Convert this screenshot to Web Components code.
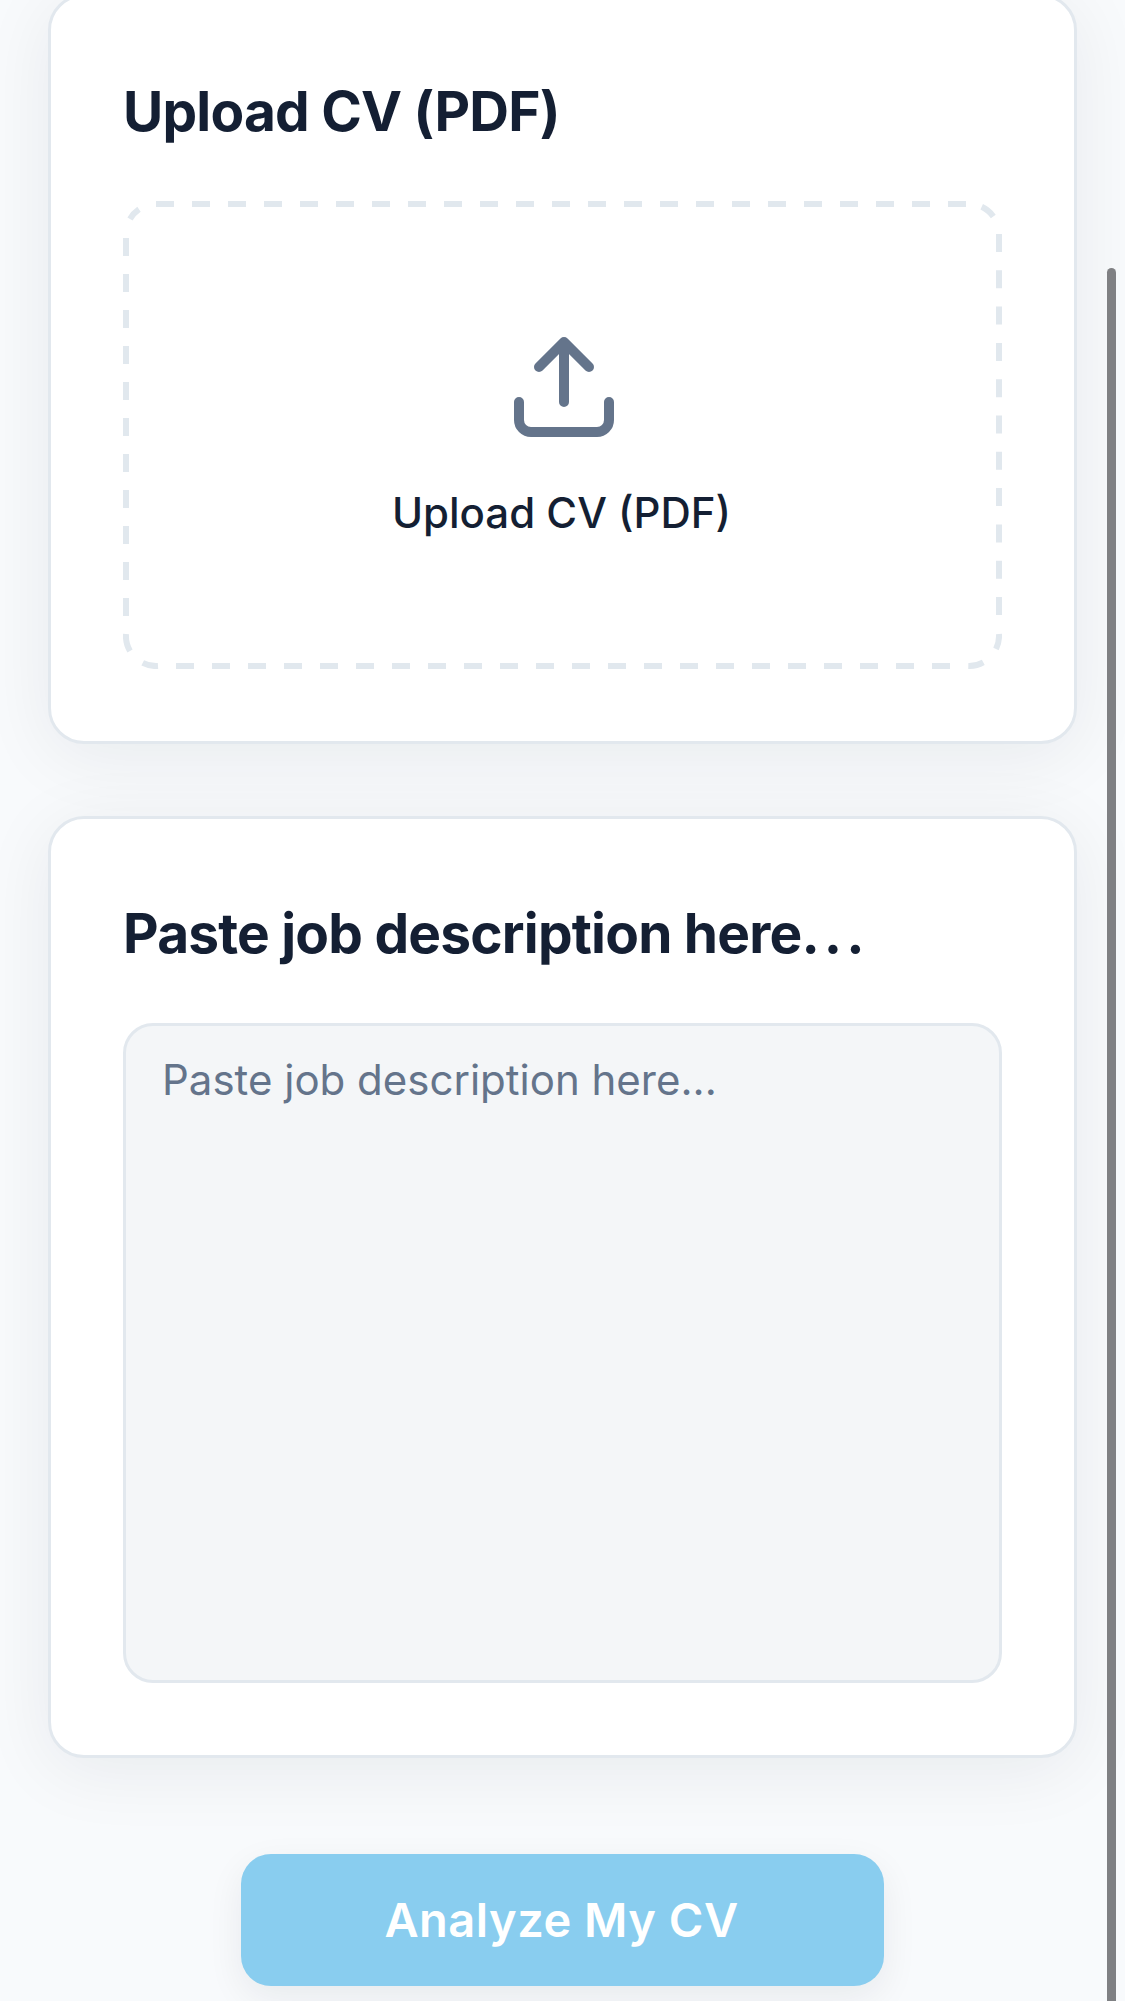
<!DOCTYPE html>
<html lang="en">
<head>
<meta charset="utf-8">
<title>Analyze CV</title>
<style>
  html, body { margin: 0; height: 2001px; overflow: hidden; background: #f8fafc; }
  body { font-family: Inter, "Liberation Sans", sans-serif; color: #141f33; }
  .dots { letter-spacing: 4px; }
</style>
</head>
<body>
<cv-page>
  <cv-card>
    <span slot="heading">Upload CV (PDF)</span>
    <cv-upload>Upload CV (PDF)</cv-upload>
  </cv-card>
  <cv-card>
    <span slot="heading">Paste job description here<span class="dots">...</span></span>
    <cv-textbox>Paste job description here...</cv-textbox>
  </cv-card>
  <cv-button>Analyze My CV</cv-button>
</cv-page>
<cv-scrollbar></cv-scrollbar>

<script>
customElements.define('cv-page', class extends HTMLElement {
  constructor () {
    super()
    this.attachShadow({ mode: 'open' })
    this.shadowRoot.innerHTML = `
      <style>
        :host {
          display: flex;
          flex-direction: column;
          gap: 72px;
          width: 1029px;
          margin: -6px 0 0 48px;
        }
      </style>
      <slot></slot>`
  }
})

customElements.define('cv-card', class extends HTMLElement {
  constructor () {
    super()
    this.attachShadow({ mode: 'open' })
    this.shadowRoot.innerHTML = `
      <style>
        :host {
          display: block;
          box-sizing: border-box;
          padding: 72px;
          background: #fff;
          border: 3px solid #e2e8ee;
          border-radius: 36px;
          box-shadow: 0 12px 72px rgba(15, 23, 42, .07);
        }
        h2 {
          margin: 0 0 48px;
          font: 700 55px/84px Inter, "Liberation Sans", sans-serif;
          letter-spacing: -.8px;
          color: #141f33;
          white-space: nowrap;
        }
      </style>
      <h2><slot name="heading"></slot></h2>
      <slot></slot>`
  }
})

customElements.define('cv-upload', class extends HTMLElement {
  constructor () {
    super()
    this.attachShadow({ mode: 'open' })
    this.shadowRoot.innerHTML = `
      <style>
        :host {
          display: flex;
          flex-direction: column;
          align-items: center;
          position: relative;
          height: 468px;
          padding-right: 2px;
          font: 500 42px/52px Inter, "Liberation Sans", sans-serif;
          color: #141f33;
        }
        .dashes { position: absolute; inset: 0; width: 100%; height: 100%; }
        .dashes path { fill: none; stroke: #e1e8ee; stroke-width: 6; }
        .icon { width: 120px; height: 120px; margin: 128px 0 38px 5px; }
        .icon path { fill: none; stroke: #64748b; stroke-width: 10; stroke-linecap: round; stroke-linejoin: round; }
      </style>
      <svg class="dashes" viewBox="0 0 879 468">
        <!-- safari style dashes, each side starts on its own, arcs on the corners -->
        <path d="M33 3H843M53 465H827M3 37V415" stroke-dasharray="18 18"/>
        <path d="M876 33V414" stroke-dasharray="18 18.3"/>
        <path d="M7 18A30 30 0 0 1 16 8.3M858.7 5.8A30 30 0 0 1 870.3 15.4M876 433A30 30 0 0 1 873 448M860.3 461.4A30 30 0 0 1 845.3 465M35 465A30 30 0 0 1 19.7 461.9M7 450A30 30 0 0 1 3 433"/>
      </svg>
      <svg class="icon" viewBox="0 0 120 120">
        <path d="M60 73V13M35 38L60 13L85 38"/>
        <path d="M15 73V91A12 12 0 0 0 27 103H93A12 12 0 0 0 105 91V73"/>
      </svg>
      <slot></slot>`
  }
})

customElements.define('cv-textbox', class extends HTMLElement {
  constructor () {
    super()
    this.attachShadow({ mode: 'open' })
    this.shadowRoot.innerHTML = `
      <style>
        :host {
          display: block;
          box-sizing: border-box;
          height: 660px;
          padding: 29px 36px;
          background: #f4f6f8;
          border: 3px solid #e2e8ee;
          border-radius: 30px;
          font: 400 42px/50px Inter, "Liberation Sans", sans-serif;
          color: #64748b;
        }
      </style>
      <slot></slot>`
  }
})

customElements.define('cv-button', class extends HTMLElement {
  constructor () {
    super()
    this.attachShadow({ mode: 'open' })
    this.shadowRoot.innerHTML = `
      <style>
        :host {
          display: flex;
          align-items: center;
          justify-content: center;
          align-self: center;
          box-sizing: border-box;
          width: 643px;
          height: 132px;
          margin: 24px 0 0;
          padding-right: 2px;
          background: #89cdef;
          border-radius: 30px;
          box-shadow: 0 12px 36px rgba(15, 23, 42, .07);
          font: 600 47px/56px Inter, "Liberation Sans", sans-serif;
          letter-spacing: .5px;
          color: #fff;
        }
      </style>
      <slot></slot>`
  }
})

customElements.define('cv-scrollbar', class extends HTMLElement {
  constructor () {
    super()
    this.attachShadow({ mode: 'open' })
    this.shadowRoot.innerHTML = `
      <style>
        :host {
          position: absolute;
          left: 1107px;
          top: 268px;
          bottom: 0;
          width: 9px;
          background: #7f8083;
          border-radius: 4.5px 4.5px 0 0;
        }
      </style>`
  }
})
</script>
</body>
</html>
